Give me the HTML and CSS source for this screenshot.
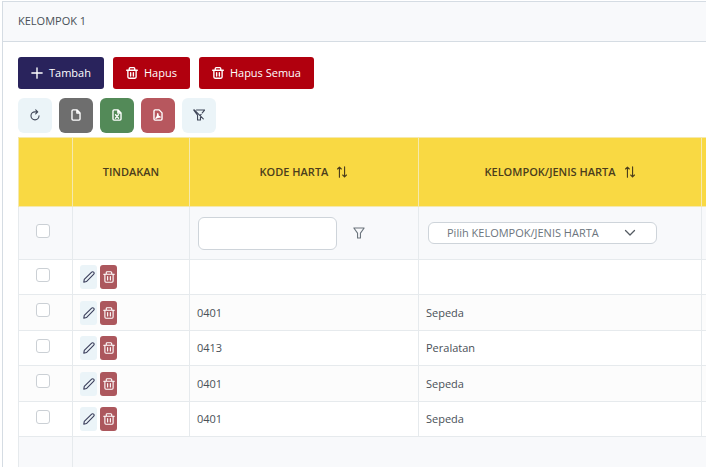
FILE: index.html
```html
<!DOCTYPE html>
<html lang="id">
	<head>
		<meta charset="UTF-8">
		<title>Kelompok 1</title>
		<link rel="stylesheet" href="styles.css">
	</head>
	<body>
		<svg class="icon-defs" aria-hidden="true">
			<symbol id="icon-plus" viewBox="0 0 14 14">
				<path d="M7 1v12M1 7h12"/>
			</symbol>
			<symbol id="icon-trash" viewBox="0 0 14 14">
				<path d="M.8 3.800h12.400M3.800 3.600V2c0-.7.4-1.200 1.100-1.200h4.200c.7 0 1.100.5 1.100 1.200v1.600M2.200 4v7.800c0 .8.5 1.300 1.300 1.300h7c.8 0 1.300-.5 1.300-1.300V4M5.400 6.500v4M8.600 6.500v4"/>
			</symbol>
			<symbol id="icon-refresh" viewBox="0 0 14 14">
				<path d="M7.800 1l2.400 2.300-2.400 2.300M9.800 3.300H7a4.700 4.700 0 1 0 4.700 4.700"/>
			</symbol>
			<symbol id="icon-file" viewBox="0 0 14 14">
				<path d="M8.300 1H3.600C2.800 1 2.300 1.500 2.300 2.200v9.600c0 .7.5 1.200 1.300 1.200h6.800c.8 0 1.300-.5 1.300-1.200V4.500zM8 1.200v3.500h3.500"/>
			</symbol>
			<symbol id="icon-excel" viewBox="0 0 14 14">
				<path d="M8.300 1H3.600C2.800 1 2.300 1.500 2.300 2.200v9.600c0 .7.5 1.200 1.300 1.200h6.800c.8 0 1.300-.5 1.300-1.200V4.500zM8 1.200v3.500h3.500M5.300 6.700l3.400 4M8.700 6.700l-3.400 4"/>
			</symbol>
			<symbol id="icon-pdf" viewBox="0 0 14 14">
				<path d="M8.300 1H3.600C2.800 1 2.300 1.500 2.300 2.200v9.600c0 .7.5 1.200 1.300 1.200h6.800c.8 0 1.300-.5 1.300-1.200V4.500zM4.600 10.800c1.200-.7 2.200-3 2.100-5.300 0 2 1.300 3.800 2.900 3.900-1.700-.2-3.800.4-5 1.400z"/>
			</symbol>
			<symbol id="icon-filter" viewBox="0 0 14 14">
				<path d="M1 1.200h12L8.700 7.200v5.600H5.300V7.200z"/>
			</symbol>
			<symbol id="icon-filter-slash" viewBox="0 0 14 14">
				<path d="M4 1.200h9.500l-2.700 3.300M.8 1.200l4.500 6v5.600h3.400V8M1.500 1l10.500 10.500M8.700 7.200l.8-1"/>
			</symbol>
			<symbol id="icon-sort" viewBox="0 0 14 14">
				<path d="M4 13V1.300M1.800 3.500L4 1.300l2.200 2.200M10 1v11.700M7.800 10.500l2.200 2.200 2.200-2.200"/>
			</symbol>
			<symbol id="icon-pencil" viewBox="0 0 14 14">
				<path d="M.9 13.100l.6-3.300L9.800 1.500c.8-.8 1.900-.8 2.600-.1s.7 1.800-.1 2.600l-8.300 8.300z"/>
			</symbol>
		</svg>
		<section class="card">
			<h1 class="card-header">KELOMPOK 1</h1>
			<div class="card-body">
				<div class="actions">
					<button class="btn btn-primary"><svg class="icon"><use href="#icon-plus"/></svg>Tambah</button>
					<button class="btn btn-danger"><svg class="icon"><use href="#icon-trash"/></svg>Hapus</button>
					<button class="btn btn-danger"><svg class="icon"><use href="#icon-trash"/></svg>Hapus Semua</button>
				</div>
				<div class="tools">
					<button class="tool" aria-label="Muat ulang"><svg class="icon"><use href="#icon-refresh"/></svg></button>
					<button class="tool tool-csv" aria-label="Ekspor CSV"><svg class="icon"><use href="#icon-file"/></svg></button>
					<button class="tool tool-excel" aria-label="Ekspor Excel"><svg class="icon"><use href="#icon-excel"/></svg></button>
					<button class="tool tool-pdf" aria-label="Ekspor PDF"><svg class="icon"><use href="#icon-pdf"/></svg></button>
					<button class="tool" aria-label="Hapus filter"><svg class="icon"><use href="#icon-filter-slash"/></svg></button>
				</div>
				<div class="table-wrap">
					<table class="table">
						<colgroup>
							<col class="col-check">
							<col class="col-action">
							<col class="col-code">
							<col class="col-group">
							<col class="col-rest">
						</colgroup>
						<thead>
							<tr class="title-row">
								<th></th>
								<th>TINDAKAN</th>
								<th><span class="sortable">KODE HARTA<svg class="icon"><use href="#icon-sort"/></svg></span></th>
								<th><span class="sortable">KELOMPOK/JENIS HARTA<svg class="icon"><use href="#icon-sort"/></svg></span></th>
								<th></th>
							</tr>
							<tr class="filter-row">
								<td class="check"><input type="checkbox" aria-label="Pilih semua"></td>
								<td></td>
								<td>
									<div class="filter">
										<input class="filter-input" type="text" aria-label="Kode harta">
										<button class="filter-button" aria-label="Filter"><svg class="icon"><use href="#icon-filter"/></svg></button>
									</div>
								</td>
								<td>
									<select class="filter-select" aria-label="Kelompok/jenis harta">
										<option>Pilih KELOMPOK/JENIS HARTA</option>
									</select>
								</td>
								<td></td>
							</tr>
						</thead>
						<tbody>
							<tr>
								<td class="check"><input type="checkbox" aria-label="Pilih baris"></td>
								<td><div class="row-actions"><button class="mini" aria-label="Ubah"><svg class="icon"><use href="#icon-pencil"/></svg></button><button class="mini mini-danger" aria-label="Hapus"><svg class="icon"><use href="#icon-trash"/></svg></button></div></td>
								<td></td>
								<td></td>
								<td></td>
							</tr>
							<tr>
								<td class="check"><input type="checkbox" aria-label="Pilih baris"></td>
								<td><div class="row-actions"><button class="mini" aria-label="Ubah"><svg class="icon"><use href="#icon-pencil"/></svg></button><button class="mini mini-danger" aria-label="Hapus"><svg class="icon"><use href="#icon-trash"/></svg></button></div></td>
								<td>0401</td>
								<td>Sepeda</td>
								<td></td>
							</tr>
							<tr>
								<td class="check"><input type="checkbox" aria-label="Pilih baris"></td>
								<td><div class="row-actions"><button class="mini" aria-label="Ubah"><svg class="icon"><use href="#icon-pencil"/></svg></button><button class="mini mini-danger" aria-label="Hapus"><svg class="icon"><use href="#icon-trash"/></svg></button></div></td>
								<td>0413</td>
								<td>Peralatan</td>
								<td></td>
							</tr>
							<tr>
								<td class="check"><input type="checkbox" aria-label="Pilih baris"></td>
								<td><div class="row-actions"><button class="mini" aria-label="Ubah"><svg class="icon"><use href="#icon-pencil"/></svg></button><button class="mini mini-danger" aria-label="Hapus"><svg class="icon"><use href="#icon-trash"/></svg></button></div></td>
								<td>0401</td>
								<td>Sepeda</td>
								<td></td>
							</tr>
							<tr>
								<td class="check"><input type="checkbox" aria-label="Pilih baris"></td>
								<td><div class="row-actions"><button class="mini" aria-label="Ubah"><svg class="icon"><use href="#icon-pencil"/></svg></button><button class="mini mini-danger" aria-label="Hapus"><svg class="icon"><use href="#icon-trash"/></svg></button></div></td>
								<td>0401</td>
								<td>Sepeda</td>
								<td></td>
							</tr>
						</tbody>
						<tfoot>
							<tr>
								<td></td>
								<td colspan="4"></td>
							</tr>
						</tfoot>
					</table>
				</div>
			</div>
		</section>
	</body>
</html>
```

FILE: styles.css
```css
*, *::before, *::after {
	box-sizing: border-box;
}

html, body {
	margin: 0;
	height: 100%;
}

body {
	display: flex;
	overflow: hidden;
	padding: 1px 0 0 2px;
	background: #fff;
	color: #495057;
	font-family: "Open Sans", "Noto Sans", sans-serif;
	font-size: 11px;
	line-height: 16px;
}

button, input, select {
	margin: 0;
	font: inherit;
}

button {
	display: flex;
	align-items: center;
	justify-content: center;
	padding: 0;
	border: 0;
	cursor: pointer;
}

.icon-defs {
	position: absolute;
	width: 0;
	height: 0;
}

.icon {
	flex: none;
	width: 12px;
	height: 12px;
	fill: none;
	stroke: currentColor;
	stroke-width: 1.3;
	stroke-linecap: round;
	stroke-linejoin: round;
}

.card {
	display: flex;
	flex-direction: column;
	flex-grow: 1;
	min-width: 0;
	border: 1px solid #d5dce3;
	border-right: 0;
	border-bottom: 0;
}

.card-header {
	margin: 0;
	padding: 11px 15px 12px;
	border-bottom: 1px solid #d5dce3;
	background: #f8f9fb;
	font-size: 11px;
	font-weight: 400;
}

.card-body {
	display: flex;
	flex-direction: column;
	flex-grow: 1;
	min-height: 0;
	padding: 15px 0 0 15px;
}

.actions {
	display: flex;
	gap: 9px;
}

.btn {
	gap: 6px;
	height: 32px;
	padding: 0 13px;
	border-radius: 3px;
	color: #fff;
}

.btn-primary {
	background: #29235c;
}

.btn-danger {
	background: #b1000e;
}

.tools {
	display: flex;
	gap: 7px;
	padding: 9px 0 4px;
}

.tool {
	width: 34px;
	height: 35px;
	padding-bottom: 2px;
	border-radius: 6px;
	background: #ebf4f8;
	color: #3f4658;
}

.tool-csv {
	background: #6e6e6e;
	color: #fff;
}

.tool-excel {
	background: #538a58;
	color: #fff;
}

.tool-pdf {
	background: #b7575e;
	color: #fff;
}

.btn .icon, .tool-csv .icon, .tool-excel .icon, .tool-pdf .icon {
	stroke-width: 1.6;
}

.table-wrap {
	flex-grow: 1;
	min-height: 0;
	overflow: hidden;
}

.table {
	width: 100%;
	border-collapse: collapse;
	table-layout: fixed;
}

.col-check {
	width: 54px;
}

.col-action {
	width: 117px;
}

.col-code {
	width: 229px;
}

.col-group {
	width: 283px;
}

.col-rest {
	width: 220px;
}

.table th, .table td {
	height: 35px;
	padding: 0 7px;
	border: 1px solid #e6eaed;
	text-align: left;
}

.table .title-row th {
	height: 69px;
	border-color: #f5e9ae;
	background: #f9d943;
	color: #4b3d1c;
	font-weight: 600;
	text-align: center;
}

.sortable {
	display: inline-flex;
	align-items: center;
	gap: 8px;
}

.table .filter-row td {
	height: 53px;
	background: #f8f9fb;
}

.table .check {
	padding-right: 13px;
}

.check input {
	display: block;
	width: 14px;
	height: 14px;
	margin: 0 auto 5px;
	border: 1px solid #cbd0d5;
	border-radius: 3px;
	background: #fff;
	appearance: none;
}

.filter {
	display: flex;
	gap: 16px;
	padding-left: 1px;
}

.filter-input {
	width: 139px;
	height: 33px;
	padding: 0 8px;
	border: 1px solid #ced4da;
	border-radius: 6px;
	background: #fff;
}

.filter-button {
	background: none;
	color: #6c757d;
}

.filter-select {
	display: block;
	width: 229px;
	height: 22px;
	margin-left: 2px;
	padding: 0 18px;
	border: 1px solid #ced4da;
	border-radius: 6px;
	background: #fff url("data:image/svg+xml,%3Csvg xmlns='http://www.w3.org/2000/svg' viewBox='0 0 12 12' fill='none' stroke='%23545b62' stroke-width='1.3' stroke-linecap='round' stroke-linejoin='round'%3E%3Cpath d='M1.500 3.500L6 8l4.500-4.500'/%3E%3C/svg%3E") no-repeat right 20px center / 12px;
	color: #6c757d;
	appearance: none;
}

.table tbody tr:nth-child(even) td {
	height: 36px;
	background: #fcfcfc;
}

.row-actions {
	display: flex;
	gap: 3px;
}

.mini {
	width: 17px;
	height: 24px;
	border-radius: 3px;
	background: #ebf4f8;
	color: #3b3f5c;
}

.mini-danger {
	background: #ac575d;
	color: #fff;
}

.table tfoot td {
	height: 60px;
	background: #f8f9fb;
}
```
